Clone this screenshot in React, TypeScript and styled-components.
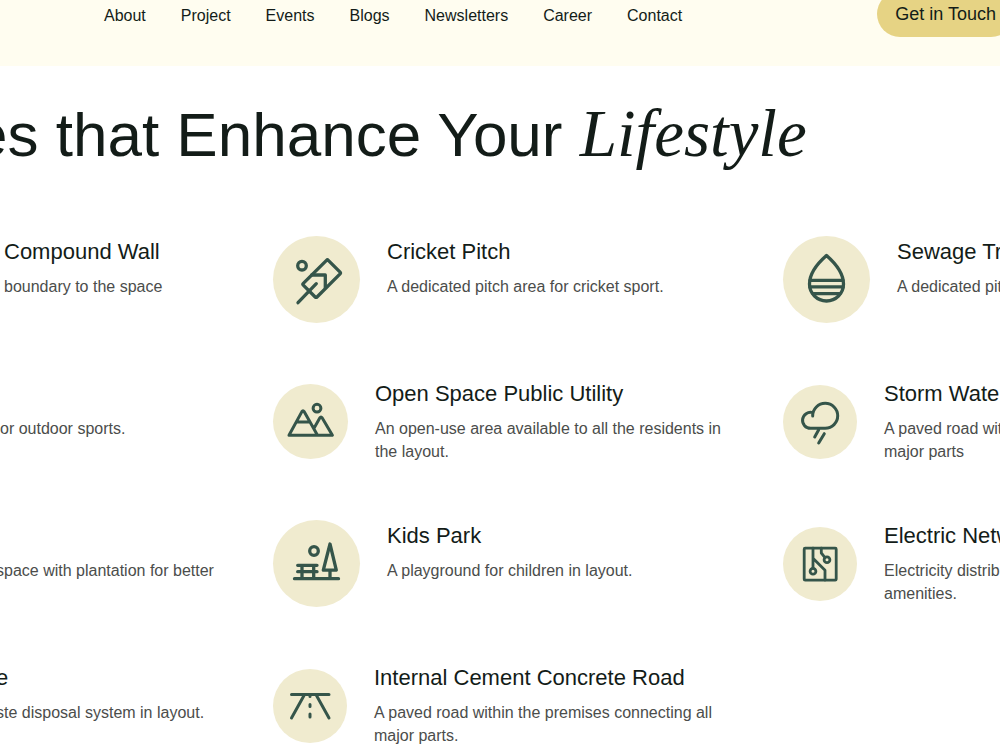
import React from "react";
import styled, { createGlobalStyle } from "styled-components";

const GlobalStyle = createGlobalStyle`
  * { box-sizing: border-box; }
  body {
    margin: 0;
    background: #ffffff;
    color: #131c18;
    font-family: "Liberation Sans", Arial, sans-serif;
    overflow: hidden;
  }
`;

const Page = styled.div`
  overflow: hidden;
`;

const Header = styled.header`
  display: flex;
  justify-content: space-between;
  height: 66px;
  padding-left: 104px;
  background: #fffdf0;
`;

const Nav = styled.nav`
  display: flex;
  gap: 35px;
  padding-top: 4px;
`;

const NavLink = styled.a`
  height: 24px;
  font-size: 16px;
  line-height: 24px;
  color: #131c18;
  text-decoration: none;
`;

const ContactButton = styled.button`
  height: 46px;
  margin: -9px -14px 0 0;
  padding: 0 18px;
  border: 0;
  border-radius: 23px;
  background: #e6d384;
  color: #131c18;
  font-family: inherit;
  font-size: 18px;
  white-space: nowrap;
`;

const Heading = styled.h1`
  margin: 31px 0 0 -27px;
  font-size: 62px;
  font-weight: 400;
  line-height: 72px;
  white-space: nowrap;
`;

const Accent = styled.em`
  font-family: "Liberation Serif", "Times New Roman", serif;
  font-size: 67px;
  line-height: 72px;
`;

const Grid = styled.main`
  display: grid;
  grid-template-columns: minmax(0, 273fr) minmax(0, 510fr) minmax(0, 217fr);
  row-gap: 55px;
  padding-top: 65px;
`;

const Item = styled.article`
  display: flex;
  align-items: center;
  gap: 27px;
  min-height: 87px;
`;

const Lead = styled(Item)<{ $indent?: number }>`
  margin-left: ${(p) => p.$indent ?? 0}px;
`;

const Badge = styled.span<{ $size: number }>`
  flex: none;
  width: ${(p) => p.$size}px;
  height: ${(p) => p.$size}px;
  border-radius: 50%;
  background: #f0ebcf;
`;

const Drawing = styled.svg`
  display: block;
  fill: none;
  stroke: #35554a;
  stroke-width: 3.3;
  stroke-linecap: round;
  stroke-linejoin: round;
`;

const Copy = styled.div`
  flex: none;
  align-self: flex-start;
  width: 346px;
`;

const Title = styled.h2`
  min-height: 30px;
  margin: 0 0 8px;
  padding-top: 1px;
  font-size: 22px;
  font-weight: 400;
  line-height: 30px;
`;

const Description = styled.p`
  margin: 0;
  color: #4b4d4b;
  font-size: 16px;
  line-height: 23px;
`;

const icons: Record<string, React.ReactNode> = {
  cricket: (
    <>
      <circle cx="29" cy="29.7" r="4.3" />
      <path d="M53.5 24.3q.9-.9 1.8 0l11.8 11.8q.9.9 0 1.8L44 61q-.9.9-1.8 0L30.3 49.2q-.9-.9 0-1.8z" />
      <path d="M25 66.7 43.3 47.7M38.7 39H52.3V51.7" />
    </>
  ),
  mountains: (
    <g strokeWidth="3">
      <circle cx="44" cy="24.2" r="3.9" />
      <path d="M16 51.3 28.9 27.6q1.1-1.8 2.2 0L44.5 51.3M41.3 43.7 46.9 33.8q1.1-1.8 2.2 0L59.4 51.3H16M24.3 38H37" />
    </g>
  ),
  park: (
    <>
      <circle cx="41" cy="31" r="4.3" />
      <path d="M24.7 45.3H44M24.7 51.7H44M29 45.3V58.7M40.7 45.3V58.7M21.5 58.7H65.5M57 24 63.3 50.2H50.3zM57 50.2V58.7" />
    </>
  ),
  road: (
    <path
      strokeWidth="3"
      d="M18.5 25.5H56M31 26.5 18.5 49M43.5 26.5 56 49M37 25.5V27.5M37 35.5V37.5M37 45V48"
    />
  ),
  drop: (
    <>
      <path d="M43.5 19.5C35.5 26.5 26.5 37.5 26.5 48A17 17 0 0 0 60.5 48C60.5 37.5 51.5 26.5 43.5 19.5Z" />
      <path d="M27 44.3H60M27 50.9H60M30 57.6H57" />
    </>
  ),
  storm: (
    <path
      strokeWidth="3"
      d="M29.7 31V27.6A8 8 0 1 0 27.7 43.3H42.2A12.5 12.5 0 1 0 29.7 30.8M35.7 44.7 31.7 52M41.3 48.7 35.7 58"
    />
  ),
  circuit: (
    <g strokeWidth="2.8">
      <rect x="21.2" y="21.2" width="32" height="32" rx="1" />
      <circle cx="44" cy="32.7" r="2.9" />
      <circle cx="30" cy="44.3" r="2.9" />
      <path d="M30 21.2V41.2M38.3 21.2V26L41.8 30.3M30 31.3 42 43.3V53" />
    </g>
  ),
};

type Amenity = {
  title?: string;
  text: string;
  icon?: string;
  size?: number;
  indent?: number;
};

const amenities: Amenity[] = [
  { title: "Compound Wall", text: "boundary to the space", indent: 4 },
  { title: "Cricket Pitch", text: "A dedicated pitch area for cricket sport.", icon: "cricket", size: 87 },
  { title: "Sewage Treatment", text: "A dedicated pit for sewage treatment.", icon: "drop", size: 87 },
  { text: "or outdoor sports." },
  {
    title: "Open Space Public Utility",
    text: "An open-use area available to all the residents in the layout.",
    icon: "mountains",
    size: 75,
  },
  {
    title: "Storm Water Drain",
    text: "A paved road within the premises connecting all major parts",
    icon: "storm",
    size: 74,
  },
  { text: "space with plantation for better", indent: -4 },
  { title: "Kids Park", text: "A playground for children in layout.", icon: "park", size: 87 },
  {
    title: "Electric Network",
    text: "Electricity distribution network with all the basic amenities.",
    icon: "circuit",
    size: 74,
  },
  { title: "e", text: "ste disposal system in layout.", indent: -4 },
  {
    title: "Internal Cement Concrete Road",
    text: "A paved road within the premises connecting all major parts.",
    icon: "road",
    size: 74,
  },
];

const links = ["About", "Project", "Events", "Blogs", "Newsletters", "Career", "Contact"];

function AmenityCopy({ title, text }: Amenity) {
  return (
    <Copy>
      <Title as={title ? "h2" : "div"}>{title ?? "\u00a0"}</Title>
      <Description>{text}</Description>
    </Copy>
  );
}

export default function App() {
  return (
    <Page>
      <GlobalStyle />
      <Header>
        <Nav>
          {links.map((l) => (
            <NavLink key={l} href={`#${l.toLowerCase()}`}>
              {l}
            </NavLink>
          ))}
        </Nav>
        <ContactButton type="button">Get in Touch</ContactButton>
      </Header>
      <Heading>
        es that Enhance Your <Accent>Lifestyle</Accent>
      </Heading>
      <Grid>
        {amenities.map((a) =>
          a.icon && a.size ? (
            <Item key={a.title}>
              <Badge $size={a.size}>
                <Drawing viewBox={`0 0 ${a.size} ${a.size}`} aria-hidden="true">
                  {icons[a.icon]}
                </Drawing>
              </Badge>
              <AmenityCopy {...a} />
            </Item>
          ) : (
            <Lead key={a.text} $indent={a.indent}>
              <AmenityCopy {...a} />
            </Lead>
          )
        )}
      </Grid>
    </Page>
  );
}
